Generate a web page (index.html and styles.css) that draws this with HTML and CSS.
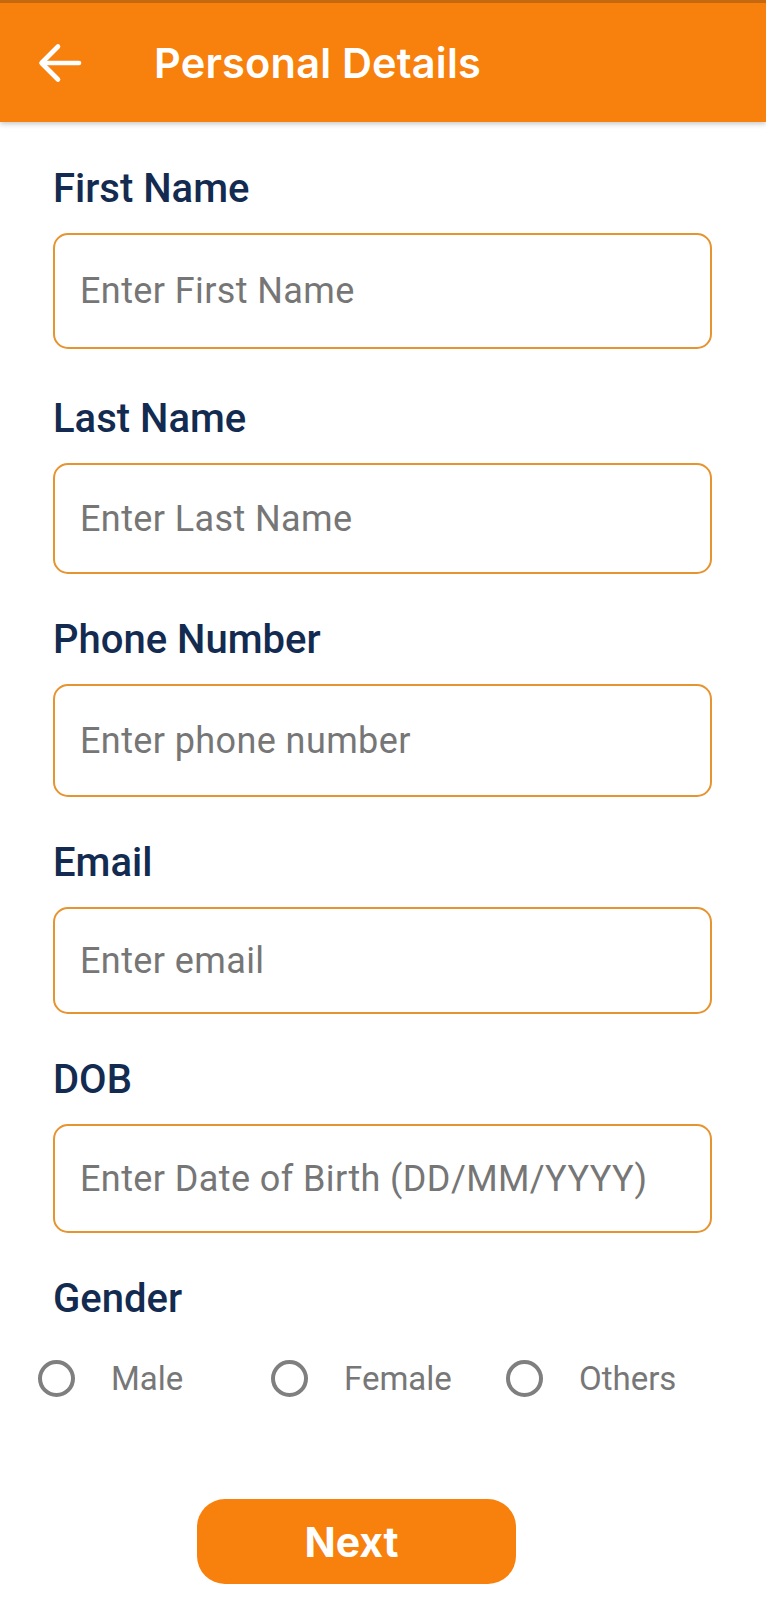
FILE: index.html
```html
<!DOCTYPE html>
<html lang="en">
<head>
<meta charset="utf-8">
<title>Personal Details</title>
<link rel="stylesheet" href="styles.css">
</head>
<body>
<header class="appbar">
  <button class="back" aria-label="Back">
    <svg viewBox="0 0 44 40" width="44" height="40" fill="none" stroke="#fff" stroke-width="4.6" stroke-linecap="round" stroke-linejoin="round">
      <path d="M41 20H4"/>
      <path d="M20 3.5L3.5 20L20 36.5"/>
    </svg>
  </button>
  <h1 class="title">Personal Details</h1>
</header>
<main class="form">
  <div class="field field-first">
    <label class="label">First Name</label>
    <div class="input input-first">Enter First Name</div>
  </div>
  <div class="field">
    <label class="label">Last Name</label>
    <div class="input input-last">Enter Last Name</div>
  </div>
  <div class="field">
    <label class="label">Phone Number</label>
    <div class="input input-phone">Enter phone number</div>
  </div>
  <div class="field">
    <label class="label">Email</label>
    <div class="input input-email">Enter email</div>
  </div>
  <div class="field">
    <label class="label">DOB</label>
    <div class="input input-dob">Enter Date of Birth (DD/MM/YYYY)</div>
  </div>
  <div class="field">
    <label class="label">Gender</label>
    <div class="radios">
      <div class="radio"><span class="circle"></span><span class="rtext">Male</span></div>
      <div class="radio"><span class="circle"></span><span class="rtext">Female</span></div>
      <div class="radio"><span class="circle"></span><span class="rtext">Others</span></div>
    </div>
  </div>
  <div class="actions">
    <button class="next">Next</button>
  </div>
</main>
</body>
</html>
```
FILE: styles.css
```css
* { box-sizing: border-box; }
html, body { margin: 0; padding: 0; background: #fff; }
body { width: 766px; height: 1599px; overflow: hidden; font-family: Roboto, "Noto Sans", sans-serif; }

.appbar {
  height: 122px;
  background: #F8800C;
  border-top: 3px solid #C4690F;
  display: flex;
  align-items: center;
  box-shadow: 0 2px 5px rgba(0,0,0,0.22);
  position: relative;
}
.back {
  background: none;
  border: 0;
  padding: 0;
  margin-left: 38px;
  width: 44px;
  height: 40px;
  display: flex;
}
.title {
  margin: 0 0 0 72px;
  color: #fff;
  font-family: Inter, sans-serif;
  font-weight: 600;
  font-size: 41.5px;
  letter-spacing: 0.2px;
}

.form {
  padding: 47px 54px 0 53px;
}
.field { margin-bottom: 46px; }
.field-first { margin-bottom: 50px; }
.label {
  display: block;
  color: #132B50;
  font-weight: 500;
  font-size: 40px;
  line-height: 40px;
  height: 40px;
  margin-bottom: 24px;
}
.input {
  border: 2px solid #E5942F;
  border-radius: 15px;
  display: flex;
  align-items: center;
  padding-left: 25px;
  color: #767676;
  font-size: 36px;
  letter-spacing: 0.4px;
}
.input-first { height: 116px; }
.input-last { height: 111px; }
.input-phone { height: 113px; }
.input-email { height: 107px; }
.input-dob { height: 109px; }

.radios {
  display: grid;
  grid-template-columns: 233px 235px 200px;
  margin-left: -15px;
  margin-top: 39px;
  height: 40px;
  align-items: center;
}
.radio { display: flex; align-items: center; }
.circle {
  width: 37px;
  height: 37px;
  border: 4px solid #7F7F7F;
  border-radius: 50%;
  flex: none;
}
.rtext {
  margin-left: 36px;
  color: #777;
  font-size: 33px;
}
.actions { padding-top: 55px; }
.next {
  margin-left: 144px;
  width: 319px;
  height: 85px;
  padding: 0 10px 0 0;
  border: 0;
  border-radius: 28px;
  background: #F8800C;
  color: #fff;
  font-family: Inter, sans-serif;
  font-weight: 700;
  font-size: 41px;
}
```
